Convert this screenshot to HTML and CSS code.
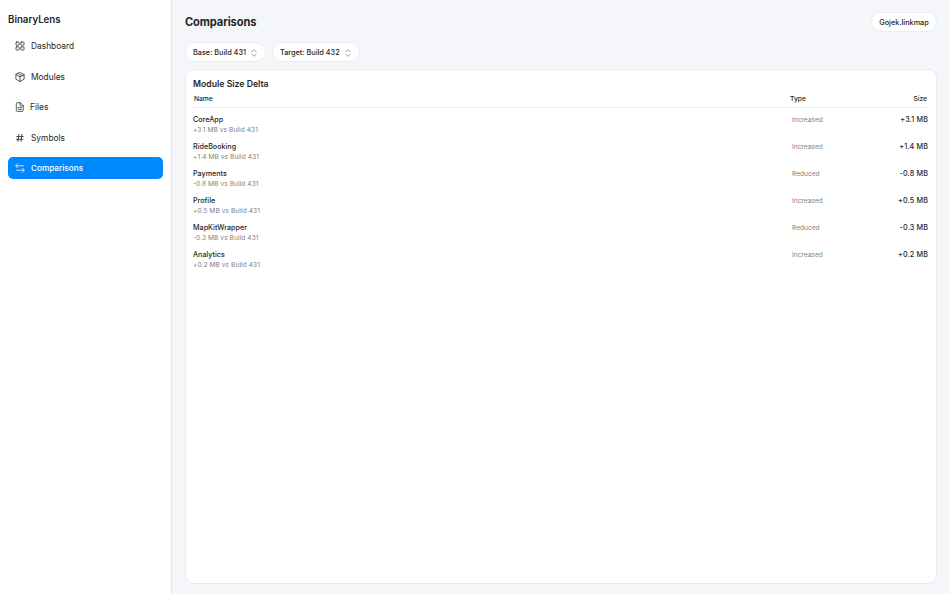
FILE: index.html
```html
<!DOCTYPE html>
<html lang="en">
<head>
<meta charset="utf-8">
<title>BinaryLens</title>
<link rel="stylesheet" href="styles.css">
</head>
<body>
<div class="app">
  <aside class="sidebar">
    <div class="brand">BinaryLens</div>
    <nav class="nav">
      <a class="nav-item"><svg class="icon" viewBox="0 0 10 10"><rect x="1" y="1" width="3.2" height="3.2" rx=".6"/><rect x="5.8" y="1" width="3.2" height="3.2" rx=".6"/><rect x="1" y="5.8" width="3.2" height="3.2" rx=".6"/><rect x="5.8" y="5.8" width="3.2" height="3.2" rx=".6"/></svg><span>Dashboard</span></a>
      <a class="nav-item"><svg class="icon" viewBox="0 0 10 10"><path d="M5 .5 9.1 2.6V7.2L5 9.5.9 7.2V2.6ZM.9 2.6 5 4.8 9.1 2.6M5 4.8V9.5M3 1.5 7.1 3.7"/></svg><span>Modules</span></a>
      <a class="nav-item files"><svg class="icon" viewBox="0 0 10 10"><path d="M5 .7H2.3Q1.3 .7 1.3 1.7V8.4Q1.3 9.4 2.3 9.4H7.2Q8.2 9.4 8.2 8.4V3.9ZM5 .7V3Q5 3.9 5.9 3.9H8.2M3 5.6H6.5M3 7.4H6.5"/></svg><span>Files</span></a>
      <a class="nav-item"><svg class="icon hash" viewBox="0 0 10 10"><path d="M3.9 1.4 2.9 8.4M6.9 1.4 5.9 8.4M1.7 3.6H8.2M1.4 6.3H7.9"/></svg><span>Symbols</span></a>
      <a class="nav-item active"><svg class="icon" viewBox="0 0 10 10"><path d="M8.4 2.8H.8M2.8 .8 .8 2.8 2.8 4.8M1.6 7.2H9.2M7.2 5.2 9.2 7.2 7.2 9.2"/></svg><span>Comparisons</span></a>
    </nav>
  </aside>
  <main class="main">
    <header class="header">
      <h1>Comparisons</h1>
      <div class="pill file">Gojek.linkmap</div>
    </header>
    <div class="filters">
      <div class="pill base"><span>Base: Build 431</span><svg class="chevrons" viewBox="0 0 6 8"><path d="M.8 2.8 3 .7 5.2 2.8M.8 5.2 3 7.3 5.2 5.2"/></svg></div>
      <div class="pill target"><span>Target: Build 432</span><svg class="chevrons" viewBox="0 0 6 8"><path d="M.8 2.8 3 .7 5.2 2.8M.8 5.2 3 7.3 5.2 5.2"/></svg></div>
    </div>
    <section class="card">
      <h2>Module Size Delta</h2>
      <div class="row head"><span>Name</span><span>Type</span><span class="size">Size</span></div>
      <div class="rows">
        <div class="row"><div><div class="name">CoreApp</div><div class="sub">+3.1 MB vs Build 431</div></div><span class="type">Increased</span><span class="size">+3.1 MB</span></div>
        <div class="row"><div><div class="name">RideBooking</div><div class="sub">+1.4 MB vs Build 431</div></div><span class="type">Increased</span><span class="size">+1.4 MB</span></div>
        <div class="row"><div><div class="name">Payments</div><div class="sub">-0.8 MB vs Build 431</div></div><span class="type">Reduced</span><span class="size">-0.8 MB</span></div>
        <div class="row"><div><div class="name">Profile</div><div class="sub">+0.5 MB vs Build 431</div></div><span class="type">Increased</span><span class="size">+0.5 MB</span></div>
        <div class="row"><div><div class="name">MapKitWrapper</div><div class="sub">-0.3 MB vs Build 431</div></div><span class="type">Reduced</span><span class="size">-0.3 MB</span></div>
        <div class="row"><div><div class="name">Analytics</div><div class="sub">+0.2 MB vs Build 431</div></div><span class="type">Increased</span><span class="size">+0.2 MB</span></div>
      </div>
    </section>
  </main>
</div>
</body>
</html>
```
FILE: styles.css
```css
* { box-sizing: border-box; }
body { margin: 0; font-family: Inter, "Liberation Sans", sans-serif; color: #262626; background: #f5f6fa; }
.app { display: flex; width: 950px; height: 594px; overflow: hidden; }
.sidebar { width: 172px; padding: 13px 8px 0; background: #fff; border-right: 1px solid #e3e4e9; }
.brand { font-size: 9.7px; font-weight: 600; line-height: 14px; }
.nav { display: flex; flex-direction: column; gap: 8.6px; margin-top: 8px; }
.nav-item { display: flex; align-items: center; gap: 6px; width: 155px; height: 22px; padding-left: 7px; border-radius: 5px; font-size: 8.4px; font-weight: 400; line-height: 12px; }
.nav-item.files { gap: 5px; }
.nav-item.active { background: #0088ff; color: #fff; font-weight: 500; font-size: 8.2px; }
.icon { width: 10px; height: 10px; fill: none; stroke: currentColor; stroke-width: .75; stroke-linejoin: round; stroke-linecap: round; }
.hash { stroke-width: .85; }
.main { flex: 1; display: flex; flex-direction: column; padding: 12px 13px 10px; }
.header { display: flex; justify-content: space-between; align-items: center; height: 20px; }
h1 { margin: 0; font-size: 11.1px; font-weight: 700; line-height: 16px; letter-spacing: -.1px; }
.pill { display: flex; align-items: center; height: 20px; padding: 1px 8px 0; background: #fff; border: 1px solid #ebecf0; border-radius: 10px; font-size: 7.3px; font-weight: 450; line-height: 11px; white-space: nowrap; }
.filters { display: flex; gap: 6px; margin-top: 10px; }
.filters .pill { justify-content: space-between; padding: 1px 8px 0 7px; }
.base { width: 81px; }
.target { width: 88px; }
.file { width: 66px; justify-content: center; padding: 1px 0 0; }
.chevrons { width: 6px; height: 8px; fill: none; stroke: #777; stroke-width: .7; stroke-linecap: round; stroke-linejoin: round; }
.card { flex: 1; margin-top: 7px; padding: 8px 8px 0 7px; background: #fff; border: 1px solid #e9eaee; border-radius: 9px; }
h2 { margin: 0; font-size: 8.7px; font-weight: 600; line-height: 12px; }
.row { display: grid; grid-template-columns: 599px 1fr auto; height: 27px; font-size: 7.2px; font-weight: 450; line-height: 10px; }
.head { grid-template-columns: 596px 1fr auto; height: 18px; padding: 4px 1px 0; border-bottom: 1px solid #ececef; font-size: 6.7px; font-weight: 500; }
.rows { padding-top: 7px; }
.sub, .type { color: #808080; font-size: 6.6px; font-weight: 400; }
.sub { letter-spacing: .07px; }
.size { text-align: right; }
.rows .size { font-weight: 450; letter-spacing: .13px; }
```
